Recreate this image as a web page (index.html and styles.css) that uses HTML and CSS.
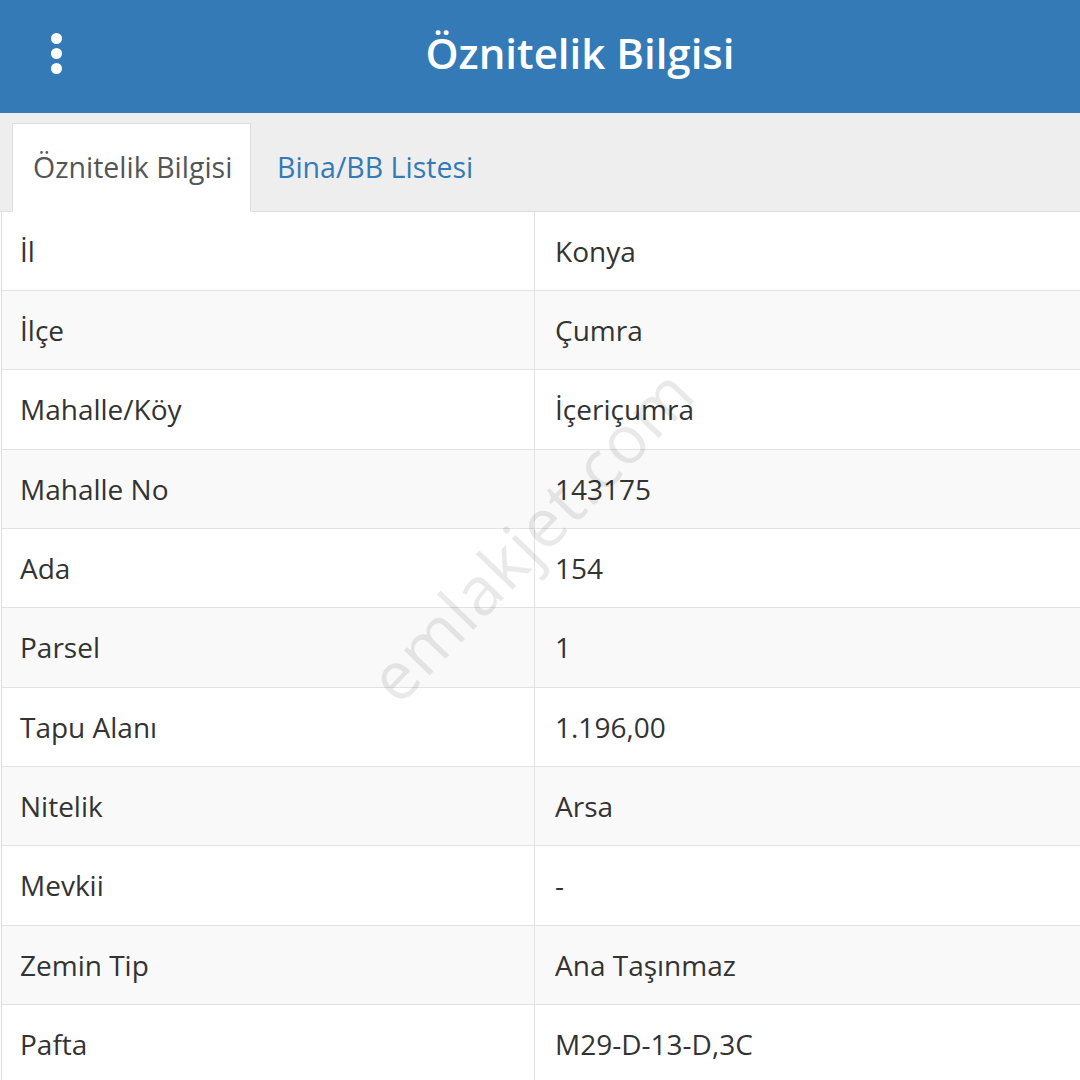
FILE: index.html
```html
<!DOCTYPE html>
<html lang="tr">
<head>
  <meta charset="UTF-8" />
  <title>Öznitelik Bilgisi</title>
  <link rel="stylesheet" href="styles.css">
</head>
<body>
  <div class="topbar">
    <div class="menu-btn">
      <span class="dot"></span>
      <span class="dot"></span>
      <span class="dot"></span>
    </div>
    <h1 class="title">Öznitelik Bilgisi</h1>
  </div>

  <div class="tabs">
    <div class="tab active">Öznitelik Bilgisi</div>
    <div class="tab">Bina/BB Listesi</div>
  </div>

  <div class="grid">
    <div class="row"><div class="cell key">İl</div><div class="cell">Konya</div></div>
    <div class="row"><div class="cell key">İlçe</div><div class="cell">Çumra</div></div>
    <div class="row"><div class="cell key">Mahalle/Köy</div><div class="cell">İçeriçumra</div></div>
    <div class="row"><div class="cell key">Mahalle No</div><div class="cell">143175</div></div>
    <div class="row"><div class="cell key">Ada</div><div class="cell">154</div></div>
    <div class="row"><div class="cell key">Parsel</div><div class="cell">1</div></div>
    <div class="row"><div class="cell key">Tapu Alanı</div><div class="cell">1.196,00</div></div>
    <div class="row"><div class="cell key">Nitelik</div><div class="cell">Arsa</div></div>
    <div class="row"><div class="cell key">Mevkii</div><div class="cell">-</div></div>
    <div class="row"><div class="cell key">Zemin Tip</div><div class="cell">Ana Taşınmaz</div></div>
    <div class="row"><div class="cell key">Pafta</div><div class="cell">M29-D-13-D,3C</div></div>
  </div>

  <div class="watermark">emlakjet.com</div>
</body>
</html>
```

FILE: styles.css
```css
html, body {
  margin: 0;
  padding: 0;
}
body {
  font-family: "Open Sans", "Noto Sans", sans-serif;
  color: #333;
  background: #fff;
  width: 1080px;
  height: 1080px;
  overflow: hidden;
  position: relative;
}
.topbar {
  height: 113px;
  background: #337ab7;
  display: flex;
  align-items: center;
}
.menu-btn {
  width: 80px;
  box-sizing: border-box;
  padding-left: 51px;
  display: flex;
  flex-direction: column;
  align-items: flex-start;
  gap: 4px;
  margin-top: -6px;
}
.dot {
  width: 11px;
  height: 11px;
  border-radius: 50%;
  background: #fff;
}
.title {
  flex: 1;
  margin: 0;
  text-align: center;
  color: #fff;
  font-size: 42px;
  font-weight: 600;
  margin-top: -8px;
}
.tabs {
  height: 98.5px;
  background: #eee;
  border-bottom: 1px solid #ddd;
  box-sizing: border-box;
  display: flex;
  align-items: flex-end;
  padding-left: 12px;
}
.tab {
  height: 89px;
  box-sizing: border-box;
  padding: 0 20px;
  display: flex;
  align-items: center;
  font-size: 28.5px;
  color: #337ab7;
  margin-bottom: -1px;
  margin-right: 2px;
}
.tab.active {
  background: #fff;
  color: #555;
  border: 1px solid #ddd;
  border-bottom-color: #fff;
  width: 239px;
  white-space: nowrap;
}
.tab + .tab {
  padding-left: 24px;
}
.grid {
  border-left: 1px solid #ddd;
  margin-left: 1px;
}
.row {
  display: flex;
  height: 79.35px;
  box-sizing: border-box;
  border-bottom: 1.5px solid #e2e2e2;
}
.row:nth-child(even) {
  background: #f9f9f9;
}
.cell {
  flex: 1;
  display: flex;
  align-items: center;
  padding: 0 20px;
  font-size: 28px;
  color: #333;
}
.cell.key {
  flex: 0 0 533px;
  box-sizing: border-box;
  padding-left: 18px;
  border-right: 1.5px solid #e2e2e2;
}
.watermark {
  position: absolute;
  left: 290px;
  top: 488px;
  width: 480px;
  text-align: center;
  font-size: 67px;
  color: rgba(0, 0, 0, 0.085);
  transform: rotate(-46deg);
  pointer-events: none;
  letter-spacing: 1px;
}
```
